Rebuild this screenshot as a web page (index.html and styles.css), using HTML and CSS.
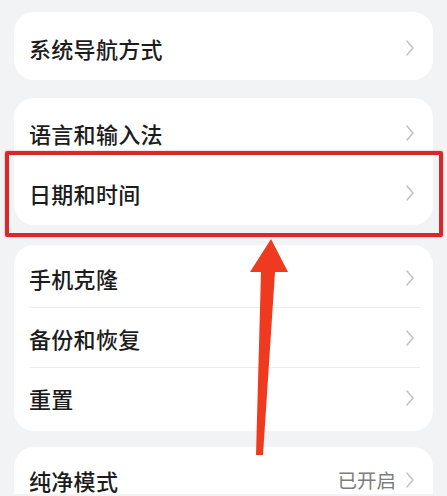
FILE: index.html
```html
<!DOCTYPE html>
<html lang="zh-CN">
<head>
<meta charset="utf-8">
<title>设置</title>
<link rel="stylesheet" href="styles.css">
</head>
<body>
<div class="page">
  <div class="card card-nav">
    <div class="row row-tall">
      <span class="label">系统导航方式</span>
      <svg class="chev" viewBox="0 0 10 18" width="10" height="18"><polyline points="2,2 8,9 2,16"/></svg>
    </div>
  </div>

  <div class="card card-lang">
    <div class="row">
      <span class="label">语言和输入法</span>
      <svg class="chev" viewBox="0 0 10 18" width="10" height="18"><polyline points="2,2 8,9 2,16"/></svg>
    </div>
    <div class="row">
      <span class="label">日期和时间</span>
      <svg class="chev" viewBox="0 0 10 18" width="10" height="18"><polyline points="2,2 8,9 2,16"/></svg>
    </div>
  </div>

  <div class="card card-backup">
    <div class="row row-s">
      <span class="label">手机克隆</span>
      <svg class="chev" viewBox="0 0 10 18" width="10" height="18"><polyline points="2,2 8,9 2,16"/></svg>
    </div>
    <div class="sep"></div>
    <div class="row row-s">
      <span class="label">备份和恢复</span>
      <svg class="chev" viewBox="0 0 10 18" width="10" height="18"><polyline points="2,2 8,9 2,16"/></svg>
    </div>
    <div class="sep"></div>
    <div class="row row-s">
      <span class="label">重置</span>
      <svg class="chev" viewBox="0 0 10 18" width="10" height="18"><polyline points="2,2 8,9 2,16"/></svg>
    </div>
  </div>

  <div class="card card-pure">
    <div class="row row-last">
      <span class="label">纯净模式</span>
      <span class="value">已开启</span>
      <svg class="chev" viewBox="0 0 10 18" width="10" height="18"><polyline points="2,2 8,9 2,16"/></svg>
    </div>
  </div>

  <div class="highlight"></div>
  <svg class="arrow" viewBox="0 0 447 496" width="447" height="496">
    <polygon points="271,239 250,272 261,272 256,455 263,455 275,272 288,272"/>
  </svg>
</div>
</body>
</html>
```

FILE: styles.css
```css
html, body {
  margin: 0;
  padding: 0;
  overflow: hidden;
  background: #f2f3f5;
}

body {
  font-family: "Noto Sans CJK SC", "Noto Sans", sans-serif;
  color: #1c1c1c;
}

.page {
  position: relative;
  width: 447px;
  height: 496px;
  padding: 12px 14px 0 14px;
  box-sizing: border-box;
}

.card {
  background: #ffffff;
  border-radius: 20px;
}

.card-nav {
  padding-top: 3px;
}

.card-lang {
  margin-top: 18px;
  padding: 5px 0 2px 0;
}

.card-backup {
  margin-top: 20px;
  padding: 3px 0 4px 0;
}

.card-pure {
  margin-top: 16px;
  padding: 22px 0 3px 0;
  border-radius: 20px 20px 0 0;
}

.row {
  display: flex;
  align-items: center;
  height: 60px;
  padding: 0 18px 0 15px;
}

.row-tall {
  height: 65px;
}

.row-s {
  height: 59px;
}

.row-last {
  height: 22px;
}

.label {
  flex: 1;
  font-size: 22px;
  font-weight: 500;
  letter-spacing: 0.3px;
  line-height: 1;
}

.value {
  font-size: 19.5px;
  color: #7d7d7d;
  margin-right: 9px;
  line-height: 1;
}

.chev {
  flex: none;
  fill: none;
  stroke: #c3c3c3;
  stroke-width: 1.6;
  stroke-linecap: round;
  stroke-linejoin: round;
}

.sep {
  height: 1px;
  background: #ededed;
  margin: 0 13px 0 16px;
}

.highlight {
  position: absolute;
  left: 5px;
  top: 151px;
  width: 438px;
  height: 86px;
  box-sizing: border-box;
  border: 4px solid #d9282b;
  border-radius: 2px;
  box-shadow: 0 0 2px rgba(217, 40, 43, 0.5);
}

.arrow {
  position: absolute;
  left: 0;
  top: 0;
  fill: #ef3a1f;
}
```
